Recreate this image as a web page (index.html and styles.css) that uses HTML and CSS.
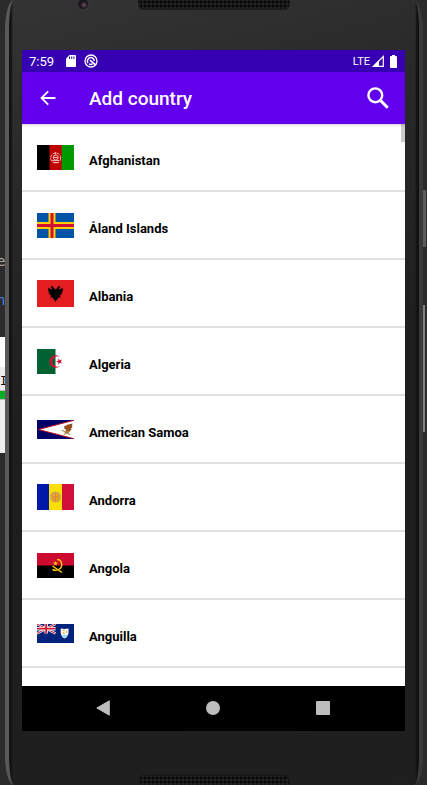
FILE: index.html
```html
<!DOCTYPE html>
<html lang="en">
<head>
<meta charset="utf-8">
<meta name="viewport" content="width=device-width, initial-scale=1">
<title>Add country</title>
<link rel="stylesheet" href="styles.css">
</head>
<body>
<div class="desktop" aria-hidden="true">
  <span class="code code-plain">e</span>
  <span class="code code-blue">n</span>
  <div class="panel"><span class="panel-text">I</span><span class="panel-bar"></span></div>
</div>
<div class="side-key power" aria-hidden="true"></div>
<div class="side-key volume" aria-hidden="true"></div>
<div class="phone">
  <div class="bezel bezel-top"><span class="camera"></span><span class="speaker"></span></div>
  <div class="screen">
    <div class="status">
      <span class="time">7:59</span>
      <svg class="sd" width="10" height="12" viewBox="0 0 10 12"><path fill="#fff" d="M3.5 0H9q1 0 1 1v10q0 1-1 1H1q-1 0-1-1V3.500z"/><path stroke="#3700b3" d="M3.500 1.500v2.500M5.700 1.500v2.500M7.900 1.500v2.500"/></svg>
      <svg class="sync" width="14" height="14" viewBox="0 0 14 14" fill="none" stroke="#fff"><circle cx="7" cy="7" r="6" stroke-width="1.300"/><path stroke-width="1.500" d="M3.900 9A3.600 3.600 0 0 1 8 3.700Q10.200 4.500 10.300 7M5 9.900q2 1 3.500 0"/><path stroke-width="1.700" d="M6 6.200l5 4.300"/></svg>
      <span class="lte">LTE</span>
      <svg class="signal" width="12" height="12" viewBox="0 0 12 12"><path fill="none" stroke="#fff" stroke-width="1.200" d="M1.500 11.300H11.300V1.500z"/><path fill="#fff" d="M0 12L7 5v7z"/></svg>
      <svg width="7" height="13" viewBox="0 0 7 13"><path fill="#fff" d="M2 0h3v1h1q1 0 1 1v10q0 1-1 1H1q-1 0-1-1V2q0-1 1-1h1z"/></svg>
    </div>
    <header class="bar">
      <button class="icon-button" aria-label="Back"><svg width="16" height="16" viewBox="0 0 16 16" fill="none" stroke="#fff" stroke-width="1.800"><path d="M15.500 8H2M8.200 1.300L1.500 8l6.700 6.700"/></svg></button>
      <h1>Add country</h1>
      <button class="icon-button search" aria-label="Search"><svg width="22" height="22" viewBox="0 0 22 22" fill="none" stroke="#fff"><circle cx="8.300" cy="8.300" r="6.900" stroke-width="2.400"/><path stroke-width="3" d="M13.400 13.400l7.300 7.300"/></svg></button>
    </header>
    <main class="content">
      <ul class="list">
        <li><a href="#af"><svg class="flag" viewBox="0 0 37 25" height="25"><path d="M0 0h13v25H0z"/><path fill="#bf0000" d="M12.500 0H25v25H12.500z"/><path fill="#009a00" d="M24.700 0H37v25H24.700z"/><g fill="none" stroke="#f0b8b8"><circle cx="18.700" cy="13" r="5" stroke-dasharray="3 1"/><circle cx="18.700" cy="12.500" r="2.500"/><path d="M15.500 15.500h6.500M16.500 12.500h4.500M16 17.500h5.500M18.700 7v3"/></g></svg><span>Afghanistan</span></a></li>
        <li><a href="#ax"><svg class="flag" viewBox="0 0 37 25" height="25"><path fill="#0053a5" d="M0 0h37v25H0z"/><path fill="none" stroke="#ffce00" stroke-width="7" d="M15 0v25M0 12.500h37"/><path fill="none" stroke="#d21034" stroke-width="3" d="M15 0v25M0 12.500h37"/></svg><span>Åland Islands</span></a></li>
        <li><a href="#al"><svg class="flag" viewBox="0 0 37 27" height="27"><path fill="#e41e20" d="M0 0h37v27H0z"/><path d="M17.300 8.500L15.500 6l-2 1 1.500 1.200-1 1.300-2.700-2v2.700l-.5.200 1.500 1-1.500.3 2 1-1.500.8 2 .5-1 1.200 2-.2-1 3 2.400-1 .2 2 1.300.6L18.500 22l1.300-2.400 1.300-.6.2-2 2.400 1-1-3 2 .2-1-1.200 2-.5-1.500-.8 2-1-1.500-.3 1.500-1-.5-.2V7.500l-2.700 2-1-1.300L23.500 7l-2-1-1.800 2.500-1.200 1z"/></svg><span>Albania</span></a></li>
        <li><a href="#dz"><svg class="flag" viewBox="0 0 37 25" height="25"><path fill="#fff" d="M0 0h37v25H0z"/><path fill="#006233" d="M0 0h18.500v25H0z"/><path fill="#d21034" d="M23.300 8.300A6.200 6.200 0 1 0 23.300 16.700 5 5 0 1 1 23.300 8.300zM18.800 12.500l2.500-.8v-2.500l1.500 2 2.400-.8-1.500 2.100 1.500 2.100-2.400-.8-1.500 2v-2.500z"/></svg><span>Algeria</span></a></li>
        <li><a href="#as"><svg class="flag" viewBox="0 0 37 19" height="19"><path fill="#000066" d="M0 0h37v19H0z"/><path fill="#fff" stroke="#bd1021" d="M38 0L1.500 9.500 38 19z"/><path fill="#99501f" d="M27 6.500l4-2 4.500-1-.5 2.500.5 1-1.500 1.500.5 1.500-2 1-1 2-3 .5-1-1.500 2-2-2-1z"/><path fill="none" stroke="#b49555" stroke-width="1.200" d="M25 10l3 2 5-.5M27 14.500l3-1.500 3 1.500"/></svg><span>American Samoa</span></a></li>
        <li><a href="#ad"><svg class="flag" viewBox="0 0 37 26" height="26"><path fill="#0018a8" d="M0 0h12v26H0z"/><path fill="#fedf00" d="M12 0h13v26H12z"/><path fill="#d0103a" d="M25 0h12v26H25z"/><path fill="#c7a15a" d="M15 8l2 .5L18.500 7 20 8.500l2-.5.5 2 1.500 1-.7 2 .7 2-1.500 1-.5 2-2-.2-1.500 1.200-1.500-1.200-2 .2-.5-2-1.500-1 .7-2-.7-2 1.500-1z"/><path fill="#f4a30c" d="M15.500 10h6v6l-3 1.500-3-1.500z"/><path fill="none" stroke="#d08a50" d="M18.500 10v7M15.500 13h6"/></svg><span>Andorra</span></a></li>
        <li><a href="#ao"><svg class="flag" viewBox="0 0 37 25" height="25"><path d="M0 0h37v25H0z"/><path fill="#cc092f" d="M0 0h37v12.500H0z"/><g fill="none" stroke="#ffcb00" stroke-width="1.400"><path d="M20 6.500c5.500 0 6 7 2.500 9.500-2 1.500-4 2-7 .5M15.500 13l9.500 6.500"/></g><path fill="#ffcb00" d="M18.500 8l.7 1.600h1.800l-1.500 1.100.6 1.800-1.600-1-1.600 1 .6-1.800L16 9.600h1.800z"/></svg><span>Angola</span></a></li>
        <li><a href="#ai"><svg class="flag" viewBox="0 0 37 19" height="19"><path fill="#00247d" d="M0 0h37v19H0z"/><g fill="none"><path stroke="#fff" stroke-width="2.200" d="M0 0l18.500 9.500M18.500 0L0 9.500"/><path stroke="#cf142b" d="M0 0l18.500 9.500M18.500 0L0 9.500"/><path stroke="#fff" stroke-width="3.400" d="M9.200 0v9.500M0 4.700h18.500"/><path stroke="#cf142b" stroke-width="1.800" d="M9.200 0v9.500M0 4.700h18.500"/></g><path fill="#fff" d="M23.700 4.500q3.800.8 7.800 0v5q-.8 3.500-3.900 5-3.100-1.500-3.900-5z"/><path fill="#9cd9e8" d="M24.300 10.800h6.600q-1 2-3.300 3.200-2.300-1.200-3.300-3.200z"/><path fill="none" stroke="#f5a13a" stroke-width="1.200" d="M25.500 6.500l2.300-.3M29.500 6.500v2.500M25.800 8.500l1.800 1.200"/></svg><span>Anguilla</span></a></li>
      </ul>
      <span class="scroll-thumb"></span>
    </main>
    <nav class="nav">
      <button aria-label="Back"><svg width="14" height="16" viewBox="0 0 14 16"><path fill="#bdbdbd" stroke="#bdbdbd" stroke-linejoin="round" d="M.8 8L13.300.8v14.400z"/></svg></button>
      <button aria-label="Home"><svg width="14" height="14" viewBox="0 0 14 14"><circle cx="7" cy="7" r="7" fill="#bdbdbd"/></svg></button>
      <button aria-label="Recent apps"><svg width="14" height="14" viewBox="0 0 14 14"><rect width="14" height="14" rx="1" fill="#bdbdbd"/></svg></button>
    </nav>
  </div>
  <div class="bezel bezel-bottom"><span class="speaker"></span></div>
</div>
</body>
</html>
```
FILE: styles.css
```css
* { box-sizing: border-box; }

body {
  margin: 0;
  position: relative;
  min-height: 100vh;
  overflow: hidden;
  background: #2b2b2b;
  color: #000;
  font-family: Roboto, "Liberation Sans", sans-serif;
}

button {
  display: flex;
  align-items: center;
  justify-content: center;
  padding: 0;
  border: 0;
  background: none;
}

svg { display: block; flex: none; }

/* Windows behind the phone */
.desktop {
  position: absolute;
  inset: 0 auto 0 0;
  width: 8px;
  overflow: hidden;
}

.code {
  position: absolute;
  left: -3px;
  font: 14px/16px "DejaVu Sans Mono", monospace;
}

.code-plain { top: 253px; color: #a9a9a9; }
.code-blue { top: 292px; color: #3f7fe0; }

.panel {
  position: absolute;
  top: 337px;
  left: 0;
  width: 8px;
  height: 116px;
  padding-top: 38px;
  background: linear-gradient(#fff 30px, #eee 30px);
}

.panel-text {
  display: block;
  height: 16px;
  font: 12px/14px "Liberation Mono", monospace;
}

.panel-bar {
  display: block;
  height: 8px;
  background: #06b025;
  outline: 1px solid #bcbcbc;
}

.side-key {
  position: absolute;
  right: 1px;
  width: 5px;
  background: #5c5a5c;
}

.power { top: 190px; height: 57px; }
.volume { top: 305px; right: 2px; height: 127px; background: #828082; }

.phone {
  position: relative;
  display: flex;
  flex-direction: column;
  height: 100vh;
  margin: 0 4px 0 5px;
  padding: 0 14px 0 13px;
  border: solid;
  border-width: 0 4px;
  border-color: #424041 #3b393b #424041 #5a5858;
  border-radius: 9px / 30px;
  background: linear-gradient(90deg, #121212 2px, transparent 4px, transparent calc(100% - 4px), #111 calc(100% - 2px)), linear-gradient(165deg, #343434, #292929 20%, #1e1e1e 50%, #1f1f1f);
}

.bezel {
  position: relative;
  display: flex;
  justify-content: center;
  flex: none;
}

.bezel-top { height: 50px; align-items: flex-start; }
.bezel-bottom { height: 54px; align-items: flex-end; }

.speaker {
  width: 152px;
  height: 10px;
  border: 1px solid #1a1a1a;
  border-top: 0;
  border-radius: 0 0 6px 6px;
  background: radial-gradient(circle, #080808 1px, #232323 2px) 0 0 / 4px 4px;
}

.bezel-bottom .speaker {
  border-top: 1px solid #161616;
  border-bottom: 0;
  border-radius: 6px 6px 0 0;
}

.camera {
  position: absolute;
  top: -4px;
  left: 53px;
  width: 16px;
  height: 16px;
  border: 3px solid #353335;
  border-radius: 50%;
  background: radial-gradient(circle at 60% 60%, #6e5365, #1c181e 40%);
}

.screen {
  display: flex;
  flex: 1;
  flex-direction: column;
  min-height: 0;
  background: #fff;
}

.status {
  display: flex;
  flex: none;
  align-items: center;
  height: 22px;
  padding: 0 8px 0 7px;
  background: #3700b3;
  color: #fff;
}

.time { font-size: 13px; }
.sd { margin-left: 12px; }
.sync { margin-left: 8px; }
.lte { margin-left: auto; font-size: 11px; }
.signal { margin: 0 6px 0 2px; }

.bar {
  position: relative;
  z-index: 1;
  display: flex;
  flex: none;
  align-items: center;
  height: 52px;
  padding: 0 11px 0 12px;
  background: #6200ee;
  box-shadow: 0 1px 3px rgba(0, 0, 0, .2);
}

.icon-button { width: 28px; height: 40px; }
.search { width: 32px; }

h1 {
  flex: 1;
  margin: 0 0 0 27px;
  padding-top: 2px;
  color: #fff;
  font-size: 19px;
  font-weight: 500;
  line-height: 24px;
}

.content {
  position: relative;
  flex: 1;
  min-height: 0;
  overflow: hidden;
}

.list {
  margin: 0;
  padding: 0;
  list-style: none;
}

.list a {
  display: flex;
  align-items: center;
  height: 68px;
  padding-left: 15px;
  border-bottom: 2px solid #e0e0e0;
  color: #000;
  font-size: 13px;
  font-weight: 700;
  line-height: 16px;
  text-decoration: none;
}

.flag { width: 37px; margin-right: 15px; }
.list span { padding-top: 7px; }

.scroll-thumb {
  position: absolute;
  top: 0;
  right: 0;
  width: 4px;
  height: 18px;
  background: #ccc;
}

.nav {
  display: flex;
  flex: none;
  align-items: center;
  justify-content: center;
  gap: 62px;
  height: 45px;
  padding: 0 2px 2px 0;
  background: #000;
}

.nav button { width: 48px; height: 43px; }
```
